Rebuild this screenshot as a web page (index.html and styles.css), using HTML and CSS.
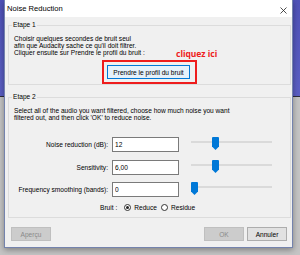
FILE: index.html
```html
<!DOCTYPE html>
<html lang="fr">
<head>
  <meta charset="UTF-8" />
  <title>Noise Reduction</title>
  <link rel="stylesheet" href="styles.css">
</head>
<body>
  <div class="window">
    <div class="titlebar">
      <span class="title">Noise Reduction</span>
      <svg class="close" viewBox="0 0 7 7"><path d="M0.5 0.5 L6.5 6.5 M6.5 0.5 L0.5 6.5" stroke="#222" stroke-width="0.8" /></svg>
    </div>

    <div class="content">
      <fieldset class="group">
        <legend>Etape 1</legend>
        <p class="text">Choisir quelques secondes de bruit seul<br>afin que Audacity sache ce qu'il doit filtrer.<br>Cliquer ensuite sur Prendre le profil du bruit :</p>
        <div class="profile">
          <span class="target">
            <button class="btn focus">Prendre le profil du bruit</button>
            <span class="hint">cliquez ici</span>
          </span>
        </div>
      </fieldset>

      <fieldset class="group group2">
        <legend>Etape 2</legend>
        <p class="text">Select all of the audio you want filtered, choose how much noise you want<br>filtered out, and then click 'OK' to reduce noise.</p>

        <div class="form">
          <label>Noise reduction (dB):</label>
          <input class="field" value="12">
          <div class="slider"><svg class="thumb" style="margin-left: 21px" viewBox="0 0 7 13"><path d="M1 0 H6 Q7 0 7 1 V9.5 L3.5 13 L0 9.5 V1 Q0 0 1 0 Z" /></svg></div>

          <label>Sensitivity:</label>
          <input class="field" value="6,00">
          <div class="slider"><svg class="thumb" style="margin-left: 21px" viewBox="0 0 7 13"><path d="M1 0 H6 Q7 0 7 1 V9.5 L3.5 13 L0 9.5 V1 Q0 0 1 0 Z" /></svg></div>

          <label>Frequency smoothing (bands):</label>
          <input class="field" value="0">
          <div class="slider"><svg class="thumb" style="margin-left: 0px" viewBox="0 0 7 13"><path d="M1 0 H6 Q7 0 7 1 V9.5 L3.5 13 L0 9.5 V1 Q0 0 1 0 Z" /></svg></div>
        </div>

        <div class="noise">
          <span class="noise-label">Bruit :</span>
          <span class="radio checked"></span><span>Reduce</span>
          <span class="radio"></span><span>Residue</span>
        </div>
      </fieldset>

      <div class="actions">
        <button class="btn" disabled>Aperçu</button>
        <span class="spacer"></span>
        <button class="btn" disabled>OK</button>
        <button class="btn">Annuler</button>
      </div>
    </div>
  </div>
</body>
</html>
```

FILE: styles.css
```css
body {
  margin: 0;
  width: 300px;
  height: 255px;
  overflow: hidden;
  font-family: 'Liberation Sans', Arial, sans-serif;
  font-size: 6.6px;
  color: #000;
  background: linear-gradient(#4f52b8 0, #5b5fc4 96px, #2d2d3a 96px, #2d2d3a 97px, #c4c4c4 97px);
}

.window {
  margin-left: 4px;
  width: 289px;
  height: 248px;
  box-sizing: border-box;
  border: 1px solid #7483ad;
  border-top: none;
  background: #f0f0f0;
  box-shadow: 0 2px 6px rgba(0, 0, 0, 0.35);
  display: flex;
  flex-direction: column;
}

.titlebar {
  height: 17px;
  flex: none;
  background: #fff;
  display: flex;
  align-items: center;
  justify-content: space-between;
  padding: 0 5px 0 2px;
}

.title {
  font-size: 7.6px;
}

.close {
  width: 7px;
  height: 7px;
  margin-top: 3px;
}

.content {
  flex: 1;
  display: flex;
  flex-direction: column;
  padding: 0 1px 0 3px;
}

.group {
  margin: 4px 0 0;
  padding: 0 5px;
  border: 1px solid #dcdcdc;
  position: relative;
}

.group2 {
  margin-top: 8px;
  padding-bottom: 5px;
}

legend {
  margin-left: -2px;
  padding: 0 1px;
  line-height: 8px;
}

.text {
  margin: 5.5px 0 0;
  line-height: 7.4px;
}

.profile {
  display: flex;
  justify-content: center;
  margin-top: 3.5px;
}

.target {
  position: relative;
  display: inline-block;
  border: 2px solid #ee1c1c;
  padding: 3px 5px 3px 3px;
}

.hint {
  position: absolute;
  left: 72px;
  top: -13px;
  color: #ee1c1c;
  font-family: 'Noto Sans', sans-serif;
  font-weight: bold;
  font-size: 8.5px;
  line-height: 10px;
  white-space: nowrap;
}

.btn {
  font-family: inherit;
  font-size: 6.6px;
  height: 14px;
  width: 40px;
  padding: 0;
  border: 1px solid #adadad;
  background: #e1e1e1;
  color: #000;
}

.btn:disabled {
  background: #cccccc;
  border-color: #bfbfbf;
  color: #8a8a8a;
}

.btn.focus {
  width: 83px;
  background: #e5f1fb;
  border-color: #0078d7;
}

.form {
  display: grid;
  grid-template-columns: 94px 67px 89px;
  column-gap: 4px;
  row-gap: 7.5px;
  margin-top: 15.5px;
}

.form label {
  text-align: right;
  align-self: center;
  white-space: nowrap;
}

.field {
  box-sizing: border-box;
  height: 15px;
  width: 67px;
  border: 1px solid #7a7a7a;
  background: #fff;
  font-family: inherit;
  font-size: 6.6px;
  padding: 0 2px;
}

.slider {
  margin-left: 8px;
  height: 15px;
  background: linear-gradient(#dadada, #dadada) 0 4px / 100% 2px no-repeat;
}

.thumb {
  display: block;
  width: 7px;
  height: 13px;
  fill: #0078d7;
}

.noise {
  display: flex;
  align-items: center;
  height: 10px;
  margin-top: 5px;
  padding-left: 86px;
}

.noise-label {
  margin-right: 7px;
}

.radio {
  box-sizing: border-box;
  width: 7px;
  height: 7px;
  border: 1px solid #333;
  border-radius: 50%;
  background: #fff;
  margin-right: 3px;
  display: flex;
  align-items: center;
  justify-content: center;
}

.radio.checked::after {
  content: "";
  width: 3px;
  height: 3px;
  border-radius: 50%;
  background: #222;
}

.radio + span {
  margin-right: 4px;
}

.actions {
  display: flex;
  gap: 3px;
  margin-top: 9px;
  padding: 0 4px 0 3px;
}

.spacer {
  flex: 1;
}
```
